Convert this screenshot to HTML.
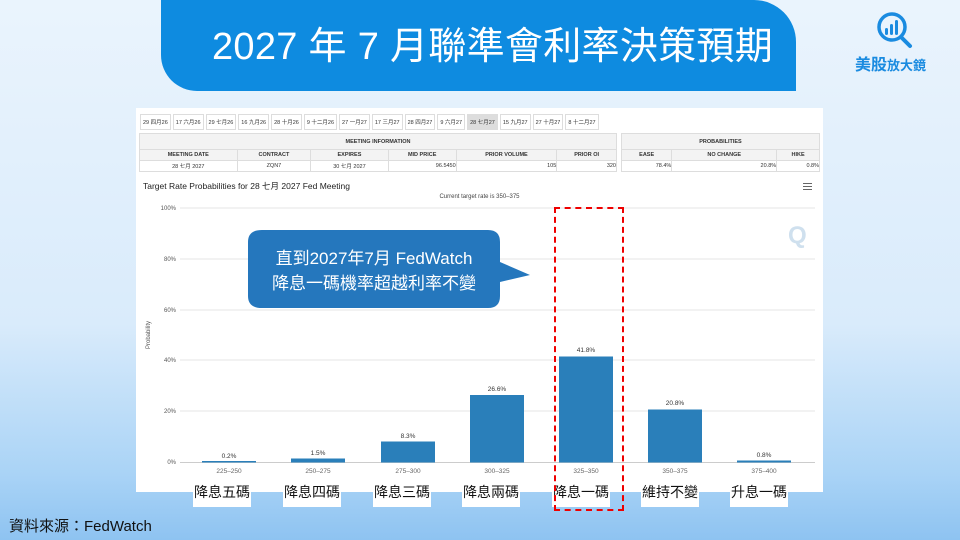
<!DOCTYPE html>
<html><head><meta charset="utf-8"><style>
*{margin:0;padding:0;box-sizing:border-box}
body{width:960px;height:540px;overflow:hidden;position:relative;font-family:"Liberation Sans","Noto Sans CJK TC",sans-serif;background:linear-gradient(180deg,#eaf4fd 0%,#d9ebfb 60%,#a9d3f6 88%,#8ec3f1 100%)}
.banner{position:absolute;left:161px;top:0;width:635px;height:91px;background:#0e8be0;border-radius:0 42px 0 36px;color:#fff;font-size:38px;text-align:center;line-height:94px;padding-left:28px;letter-spacing:0.3px}
.panel{position:absolute;left:136px;top:108px;width:687px;height:384px;background:#fff}
.tabs{position:absolute;left:4px;top:6px;display:flex;gap:2px}
.tabs span{border:1px solid #ddd;font-size:5.5px;padding:3px 2px;color:#333;background:#fff;white-space:nowrap}
.tabs span.a{background:#ddd}
table{position:absolute;border-collapse:collapse;font-size:5.5px;color:#333}
td{border:1px solid #ddd;height:11px;text-align:center}
th{border:1px solid #ddd;background:#f3f3f3;font-weight:bold;height:16px}
.sub{background:#f3f3f3;font-weight:bold}
.lbl{position:absolute;top:478px;width:58px;height:29px;background:#fff;font-size:14px;color:#111;text-align:center;line-height:29px}
</style></head><body>
<div class="banner">2027 年 7 月聯準會利率決策預期</div>
<svg style="position:absolute;left:875px;top:10px" width="40" height="42" viewBox="0 0 40 42"><circle cx="17" cy="17" r="13" fill="none" stroke="#1a8be0" stroke-width="3.5"/><line x1="26" y1="27" x2="35" y2="36" stroke="#1a8be0" stroke-width="4" stroke-linecap="round"/><rect x="10" y="18" width="3" height="7" rx="1.5" fill="#1a8be0"/><rect x="15" y="14" width="3" height="11" rx="1.5" fill="#1a8be0"/><rect x="20" y="10" width="3" height="15" rx="1.5" fill="#1a8be0"/></svg>
<div style="position:absolute;left:855px;top:51px;color:#1a8be0;font-weight:bold;font-size:16px;white-space:nowrap">美股<span style="font-size:13px">放大鏡</span></div>
<div class="panel">
<div class="tabs"><span>29 四月26</span><span>17 六月26</span><span>29 七月26</span><span>16 九月26</span><span>28 十月26</span><span>9 十二月26</span><span>27 一月27</span><span>17 三月27</span><span>28 四月27</span><span>9 六月27</span><span class="a">28 七月27</span><span>15 九月27</span><span>27 十月27</span><span>8 十二月27</span></div>
<table style="left:3px;top:25px;width:478px"><tr><th colspan="6">MEETING INFORMATION</th></tr>
<tr class="sub"><td>MEETING DATE</td><td>CONTRACT</td><td>EXPIRES</td><td>MID PRICE</td><td>PRIOR VOLUME</td><td>PRIOR OI</td></tr>
<tr><td>28 七月 2027</td><td>ZQN7</td><td>30 七月 2027</td><td style="text-align:right">96.5450</td><td style="text-align:right">105</td><td style="text-align:right">320</td></tr></table>
<table style="left:485px;top:25px;width:199px"><tr><th colspan="3">PROBABILITIES</th></tr>
<tr class="sub"><td>EASE</td><td>NO CHANGE</td><td>HIKE</td></tr>
<tr><td style="text-align:right">78.4%</td><td style="text-align:right">20.8%</td><td style="text-align:right">0.8%</td></tr></table>
<div style="position:absolute;left:7px;top:72px;font-size:8.5px;color:#222">Target Rate Probabilities for 28 七月 2027 Fed Meeting</div>
<div style="position:absolute;left:667px;top:75px;width:9px;height:7px;border-top:1.5px solid #666;border-bottom:1.5px solid #666"><div style="margin-top:1.5px;border-top:1.5px solid #666"></div></div>
<div style="position:absolute;left:0;width:687px;top:86px;text-align:center;font-size:6px;color:#444">Current target rate is 350–375</div>
</div>
<svg style="position:absolute;left:0;top:0" width="960" height="540">
<g font-size="6" fill="#555" font-family="Liberation Sans" text-anchor="end">
<text x="176" y="210">100%</text><text x="176" y="261">80%</text><text x="176" y="312">60%</text><text x="176" y="362">40%</text><text x="176" y="413">20%</text><text x="176" y="464">0%</text></g>
<g stroke="#e6e6e6" stroke-width="1"><line x1="180" y1="208" x2="815" y2="208"/><line x1="180" y1="259" x2="815" y2="259"/><line x1="180" y1="310" x2="815" y2="310"/><line x1="180" y1="360" x2="815" y2="360"/><line x1="180" y1="411" x2="815" y2="411"/></g>
<line x1="180" y1="462.5" x2="815" y2="462.5" stroke="#ccc"/>
<text x="150" y="335" font-size="6" fill="#555" transform="rotate(-90 150 335)" text-anchor="middle">Probability</text>
<g fill="#2a7fba">
<rect x="202" y="461" width="54" height="1.5"/><rect x="291" y="458.5" width="54" height="4"/><rect x="381" y="441.5" width="54" height="21"/><rect x="470" y="395" width="54" height="67.5"/><rect x="559" y="356.5" width="54" height="106"/><rect x="648" y="409.5" width="54" height="53"/><rect x="737" y="460.5" width="54" height="2"/></g>
<g font-size="6.5" fill="#333" text-anchor="middle" font-family="Liberation Sans">
<text x="229" y="458">0.2%</text><text x="318" y="455">1.5%</text><text x="408" y="438">8.3%</text><text x="497" y="391">26.6%</text><text x="586" y="352">41.8%</text><text x="675" y="405">20.8%</text><text x="764" y="457">0.8%</text>
<text x="229" y="473" fill="#666">225–250</text><text x="318" y="473" fill="#666">250–275</text><text x="408" y="473" fill="#666">275–300</text><text x="497" y="473" fill="#666">300–325</text><text x="586" y="473" fill="#666">325–350</text><text x="675" y="473" fill="#666">350–375</text><text x="764" y="473" fill="#666">375–400</text></g>
<text x="788" y="243" font-size="24" font-weight="bold" fill="#cfe0ee" font-family="Liberation Sans">Q</text>
<path d="M262 230 H488 Q500 230 500 242 V262 L530 275 L500 282 V296 Q500 308 488 308 H262 Q248 308 248 296 V242 Q248 230 262 230Z" fill="#2577bd"/>
<text x="374" y="264" font-size="17" fill="#fff" text-anchor="middle" font-family="Liberation Sans, Noto Sans CJK TC">直到2027年7月 FedWatch</text>
<text x="374" y="289" font-size="17" fill="#fff" text-anchor="middle" font-family="Liberation Sans, Noto Sans CJK TC">降息一碼機率超越利率不變</text>
</svg>
<div class="lbl" style="left:193px">降息五碼</div><div class="lbl" style="left:283px">降息四碼</div><div class="lbl" style="left:373px">降息三碼</div><div class="lbl" style="left:462px">降息兩碼</div><div class="lbl" style="left:552px">降息一碼</div><div class="lbl" style="left:641px">維持不變</div><div class="lbl" style="left:730px">升息一碼</div>
<div style="position:absolute;left:554px;top:207px;width:70px;height:304px;border:2px dashed #e00"></div>
<div style="position:absolute;left:9px;top:515px;font-size:15px;color:#111">資料來源：FedWatch</div>
</body></html>
